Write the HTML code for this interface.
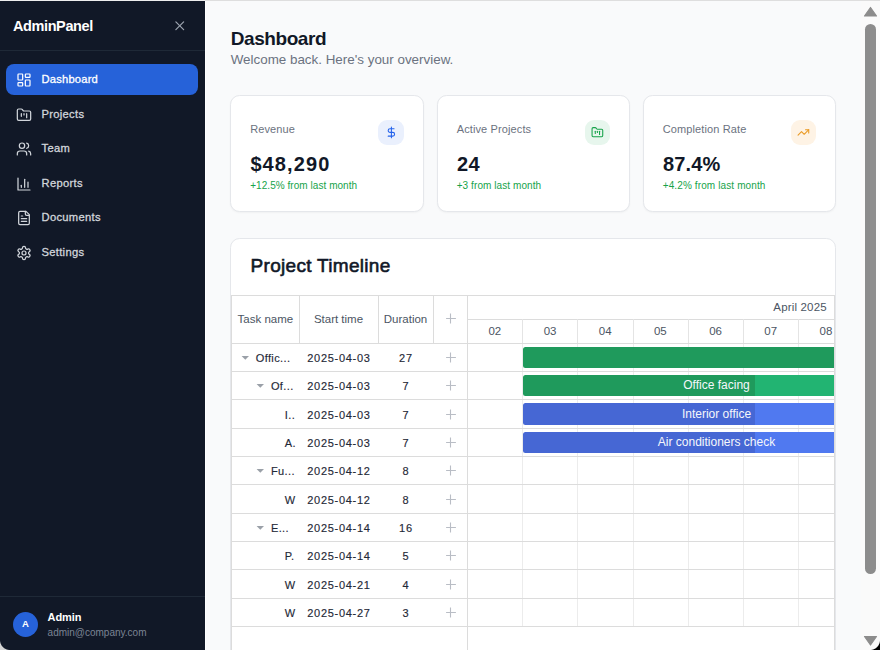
<!DOCTYPE html><html><head><meta charset="utf-8"><style>html,body{margin:0;padding:0;width:880px;height:650px;overflow:hidden;background:#f9fafb}body{position:relative;font-family:"Liberation Sans", sans-serif}</style></head><body><div style="position:absolute;left:0;top:0;width:205px;height:650px;background:#111827"></div><div style="position:absolute;left:13px;top:19.13px;font-size:14.5px;line-height:14.5px;color:#ffffff;font-weight:700;letter-spacing:-0.4px;white-space:nowrap;">AdminPanel</div><svg style="position:absolute;left:172px;top:18px" width="15.5" height="15.5" viewBox="0 0 24 24" fill="none" stroke="#9ca3af" stroke-width="1.9" stroke-linecap="round" stroke-linejoin="round"><path d="M18 6 6 18"/><path d="m6 6 12 12"/></svg><div style="position:absolute;left:0;top:50px;width:205px;height:1px;background:#1f2937"></div><div style="position:absolute;left:6px;top:64px;width:192px;height:31px;border-radius:8px;background:#2662d9"></div><svg style="position:absolute;left:15.75px;top:71.5px" width="16" height="16" viewBox="0 0 24 24" fill="none" stroke="#ffffff" stroke-width="1.85" stroke-linecap="round" stroke-linejoin="round"><rect width="7" height="9" x="3" y="3" rx="1"/><rect width="7" height="5" x="14" y="3" rx="1"/><rect width="7" height="9" x="14" y="12" rx="1"/><rect width="7" height="5" x="3" y="16" rx="1"/></svg><div style="position:absolute;left:41.5px;top:73.72px;font-size:11.2px;line-height:11.2px;color:#ffffff;font-weight:400;letter-spacing:0.2px;white-space:nowrap;-webkit-text-stroke:0.3px #ffffff">Dashboard</div><svg style="position:absolute;left:15.75px;top:106.5px" width="16" height="16" viewBox="0 0 24 24" fill="none" stroke="#d1d5db" stroke-width="1.85" stroke-linecap="round" stroke-linejoin="round"><path d="M4 20h16a2 2 0 0 0 2-2V8a2 2 0 0 0-2-2h-7.93a2 2 0 0 1-1.66-.9l-.82-1.2A2 2 0 0 0 7.93 3H4a2 2 0 0 0-2 2v13c0 1.1.9 2 2 2Z"/><path d="M8 10v4"/><path d="M12 10v2"/><path d="M16 10v6"/></svg><div style="position:absolute;left:41.5px;top:108.72px;font-size:11.2px;line-height:11.2px;color:#d1d5db;font-weight:400;letter-spacing:0.3px;white-space:nowrap;-webkit-text-stroke:0.3px #d1d5db">Projects</div><svg style="position:absolute;left:15.75px;top:140.8px" width="16" height="16" viewBox="0 0 24 24" fill="none" stroke="#d1d5db" stroke-width="1.85" stroke-linecap="round" stroke-linejoin="round"><path d="M16 21v-2a4 4 0 0 0-4-4H6a4 4 0 0 0-4 4v2"/><circle cx="9" cy="7" r="4"/><path d="M22 21v-2a4 4 0 0 0-3-3.87"/><path d="M16 3.13a4 4 0 0 1 0 7.75"/></svg><div style="position:absolute;left:41.5px;top:143.02px;font-size:11.2px;line-height:11.2px;color:#d1d5db;font-weight:400;letter-spacing:0.3px;white-space:nowrap;-webkit-text-stroke:0.3px #d1d5db">Team</div><svg style="position:absolute;left:15.75px;top:175.5px" width="16" height="16" viewBox="0 0 24 24" fill="none" stroke="#d1d5db" stroke-width="1.85" stroke-linecap="round" stroke-linejoin="round"><path d="M3 3v18h18"/><path d="M18 17V9"/><path d="M13 17V5"/><path d="M8 17v-3"/></svg><div style="position:absolute;left:41.5px;top:177.72px;font-size:11.2px;line-height:11.2px;color:#d1d5db;font-weight:400;letter-spacing:0.3px;white-space:nowrap;-webkit-text-stroke:0.3px #d1d5db">Reports</div><svg style="position:absolute;left:15.75px;top:209.8px" width="16" height="16" viewBox="0 0 24 24" fill="none" stroke="#d1d5db" stroke-width="1.85" stroke-linecap="round" stroke-linejoin="round"><path d="M15 2H6a2 2 0 0 0-2 2v16a2 2 0 0 0 2 2h12a2 2 0 0 0 2-2V7Z"/><path d="M14 2v4a2 2 0 0 0 2 2h4"/><path d="M10 9H8"/><path d="M16 13H8"/><path d="M16 17H8"/></svg><div style="position:absolute;left:41.5px;top:212.02px;font-size:11.2px;line-height:11.2px;color:#d1d5db;font-weight:400;letter-spacing:0.3px;white-space:nowrap;-webkit-text-stroke:0.3px #d1d5db">Documents</div><svg style="position:absolute;left:15.75px;top:244.5px" width="16" height="16" viewBox="0 0 24 24" fill="none" stroke="#d1d5db" stroke-width="1.85" stroke-linecap="round" stroke-linejoin="round"><path d="M12.22 2h-.44a2 2 0 0 0-2 2v.18a2 2 0 0 1-1 1.73l-.43.25a2 2 0 0 1-2 0l-.15-.08a2 2 0 0 0-2.73.73l-.22.38a2 2 0 0 0 .73 2.73l.15.1a2 2 0 0 1 1 1.72v.51a2 2 0 0 1-1 1.74l-.15.09a2 2 0 0 0-.73 2.73l.22.38a2 2 0 0 0 2.73.73l.15-.08a2 2 0 0 1 2 0l.43.25a2 2 0 0 1 1 1.73V20a2 2 0 0 0 2 2h.44a2 2 0 0 0 2-2v-.18a2 2 0 0 1 1-1.73l.43-.25a2 2 0 0 1 2 0l.15.08a2 2 0 0 0 2.73-.73l.22-.39a2 2 0 0 0-.73-2.73l-.15-.08a2 2 0 0 1-1-1.74v-.5a2 2 0 0 1 1-1.74l.15-.09a2 2 0 0 0 .73-2.73l-.22-.38a2 2 0 0 0-2.73-.73l-.15.08a2 2 0 0 1-2 0l-.43-.25a2 2 0 0 1-1-1.73V4a2 2 0 0 0-2-2z"/><circle cx="12" cy="12" r="3"/></svg><div style="position:absolute;left:41.5px;top:246.72px;font-size:11.2px;line-height:11.2px;color:#d1d5db;font-weight:400;letter-spacing:0.3px;white-space:nowrap;-webkit-text-stroke:0.3px #d1d5db">Settings</div><div style="position:absolute;left:0;top:596px;width:205px;height:1px;background:#1f2937"></div><div style="position:absolute;left:13px;top:612px;width:25px;height:25px;border-radius:50%;background:#2662d9"></div><div style="position:absolute;left:15.50px;width:20px;text-align:center;top:619.26px;font-size:9.5px;line-height:9.5px;color:#ffffff;font-weight:700;letter-spacing:0px;white-space:nowrap;">A</div><div style="position:absolute;left:47.6px;top:611.69px;font-size:11px;line-height:11px;color:#ffffff;font-weight:700;letter-spacing:-0.1px;white-space:nowrap;">Admin</div><div style="position:absolute;left:47.6px;top:627.53px;font-size:10px;line-height:10px;color:#7b8494;font-weight:400;letter-spacing:0px;white-space:nowrap;">admin@company.com</div><div style="position:absolute;left:205px;top:0;width:675px;height:650px;background:#f9fafb"></div><div style="position:absolute;left:205px;top:0;width:1px;height:650px;background:#ffffff"></div><div style="position:absolute;left:230.7px;top:28.82px;font-size:19px;line-height:19px;color:#111827;font-weight:700;letter-spacing:-0.42px;white-space:nowrap;">Dashboard</div><div style="position:absolute;left:230.7px;top:52.56px;font-size:13.4px;line-height:13.4px;color:#6b7280;font-weight:400;letter-spacing:0px;white-space:nowrap;">Welcome back. Here&#39;s your overview.</div><div style="position:absolute;left:230px;top:95px;width:191.5px;height:114.5px;border:1px solid #e5e7eb;border-radius:9.6px;background:#fff;box-shadow:0 1px 2px rgba(0,0,0,0.04)"></div><div style="position:absolute;left:250.2px;top:123.69px;font-size:11px;line-height:11px;color:#6b7280;font-weight:400;letter-spacing:0.12px;white-space:nowrap;">Revenue</div><div style="position:absolute;left:250.4px;top:154.07px;font-size:20px;line-height:20px;color:#111827;font-weight:700;letter-spacing:1.1px;white-space:nowrap;">$48,290</div><div style="position:absolute;left:250.2px;top:180.53px;font-size:10px;line-height:10px;color:#16a34a;font-weight:400;letter-spacing:0.05px;white-space:nowrap;">+12.5% from last month</div><div style="position:absolute;left:378.3px;top:119.7px;width:25.6px;height:25.6px;border-radius:9px;background:#eaf0fd"></div><svg style="position:absolute;left:384.7px;top:126.10000000000001px" width="12.8" height="12.8" viewBox="0 0 24 24" fill="none" stroke="#2563eb" stroke-width="2" stroke-linecap="round" stroke-linejoin="round"><line x1="12" x2="12" y1="2" y2="22"/><path d="M17 5H9.5a3.5 3.5 0 0 0 0 7h5a3.5 3.5 0 0 1 0 7H6"/></svg><div style="position:absolute;left:436.5px;top:95px;width:191.5px;height:114.5px;border:1px solid #e5e7eb;border-radius:9.6px;background:#fff;box-shadow:0 1px 2px rgba(0,0,0,0.04)"></div><div style="position:absolute;left:456.7px;top:123.69px;font-size:11px;line-height:11px;color:#6b7280;font-weight:400;letter-spacing:0.12px;white-space:nowrap;">Active Projects</div><div style="position:absolute;left:456.9px;top:154.07px;font-size:20px;line-height:20px;color:#111827;font-weight:700;letter-spacing:0.4px;white-space:nowrap;">24</div><div style="position:absolute;left:456.7px;top:180.53px;font-size:10px;line-height:10px;color:#16a34a;font-weight:400;letter-spacing:0.08px;white-space:nowrap;">+3 from last month</div><div style="position:absolute;left:584.8px;top:119.7px;width:25.6px;height:25.6px;border-radius:9px;background:#e7f6ed"></div><svg style="position:absolute;left:591.1999999999999px;top:126.10000000000001px" width="12.8" height="12.8" viewBox="0 0 24 24" fill="none" stroke="#16a34a" stroke-width="2" stroke-linecap="round" stroke-linejoin="round"><path d="M4 20h16a2 2 0 0 0 2-2V8a2 2 0 0 0-2-2h-7.93a2 2 0 0 1-1.66-.9l-.82-1.2A2 2 0 0 0 7.93 3H4a2 2 0 0 0-2 2v13c0 1.1.9 2 2 2Z"/><path d="M8 10v4"/><path d="M12 10v2"/><path d="M16 10v6"/></svg><div style="position:absolute;left:642.5px;top:95px;width:191.5px;height:114.5px;border:1px solid #e5e7eb;border-radius:9.6px;background:#fff;box-shadow:0 1px 2px rgba(0,0,0,0.04)"></div><div style="position:absolute;left:662.7px;top:123.69px;font-size:11px;line-height:11px;color:#6b7280;font-weight:400;letter-spacing:0.12px;white-space:nowrap;">Completion Rate</div><div style="position:absolute;left:662.9px;top:154.07px;font-size:20px;line-height:20px;color:#111827;font-weight:700;letter-spacing:0.2px;white-space:nowrap;">87.4%</div><div style="position:absolute;left:662.7px;top:180.53px;font-size:10px;line-height:10px;color:#16a34a;font-weight:400;letter-spacing:0.12px;white-space:nowrap;">+4.2% from last month</div><div style="position:absolute;left:790.8px;top:119.7px;width:25.6px;height:25.6px;border-radius:9px;background:#fef3e5"></div><svg style="position:absolute;left:797.1999999999999px;top:126.10000000000001px" width="12.8" height="12.8" viewBox="0 0 24 24" fill="none" stroke="#ea9a24" stroke-width="2" stroke-linecap="round" stroke-linejoin="round"><polyline points="22 7 13.5 15.5 8.5 10.5 2 17"/><polyline points="16 7 22 7 22 13"/></svg><div style="position:absolute;left:230px;top:238px;width:604px;height:440px;border:1px solid #e5e7eb;border-radius:9.6px;background:#fff"></div><div style="position:absolute;left:250.6px;top:255.82px;font-size:19px;line-height:19px;color:#111827;font-weight:400;letter-spacing:0.3px;white-space:nowrap;-webkit-text-stroke:0.6px #111827">Project Timeline</div><div style="position:absolute;left:231px;top:295px;width:603px;height:1px;background:#dcdcdc"></div><div style="position:absolute;left:231px;top:295px;width:1px;height:400px;background:#dcdcdc"></div><div style="position:absolute;left:231px;top:343px;width:603px;height:1px;background:#dcdcdc"></div><div style="position:absolute;left:299px;top:295px;width:1px;height:48px;background:#dcdcdc"></div><div style="position:absolute;left:378px;top:295px;width:1px;height:48px;background:#dcdcdc"></div><div style="position:absolute;left:433px;top:295px;width:1px;height:48px;background:#dcdcdc"></div><div style="position:absolute;left:467px;top:295px;width:1px;height:400px;background:#dcdcdc"></div><div style="position:absolute;left:467px;top:319px;width:367px;height:1px;background:#dcdcdc"></div><div style="position:absolute;left:834px;top:295px;width:1px;height:400px;background:#dcdcdc"></div><div style="position:absolute;left:469.88px;width:50px;text-align:center;top:326.37px;font-size:11.5px;line-height:11.5px;color:#4b5563;font-weight:400;letter-spacing:0px;white-space:nowrap;">02</div><div style="position:absolute;left:522px;top:319px;width:1px;height:24px;background:#e4e4e4"></div><div style="position:absolute;left:522px;top:344px;width:1px;height:282px;background:#ececec"></div><div style="position:absolute;left:525.06px;width:50px;text-align:center;top:326.37px;font-size:11.5px;line-height:11.5px;color:#4b5563;font-weight:400;letter-spacing:0px;white-space:nowrap;">03</div><div style="position:absolute;left:577px;top:319px;width:1px;height:24px;background:#e4e4e4"></div><div style="position:absolute;left:577px;top:344px;width:1px;height:282px;background:#ececec"></div><div style="position:absolute;left:580.23px;width:50px;text-align:center;top:326.37px;font-size:11.5px;line-height:11.5px;color:#4b5563;font-weight:400;letter-spacing:0px;white-space:nowrap;">04</div><div style="position:absolute;left:633px;top:319px;width:1px;height:24px;background:#e4e4e4"></div><div style="position:absolute;left:633px;top:344px;width:1px;height:282px;background:#ececec"></div><div style="position:absolute;left:635.39px;width:50px;text-align:center;top:326.37px;font-size:11.5px;line-height:11.5px;color:#4b5563;font-weight:400;letter-spacing:0px;white-space:nowrap;">05</div><div style="position:absolute;left:688px;top:319px;width:1px;height:24px;background:#e4e4e4"></div><div style="position:absolute;left:688px;top:344px;width:1px;height:282px;background:#ececec"></div><div style="position:absolute;left:690.57px;width:50px;text-align:center;top:326.37px;font-size:11.5px;line-height:11.5px;color:#4b5563;font-weight:400;letter-spacing:0px;white-space:nowrap;">06</div><div style="position:absolute;left:743px;top:319px;width:1px;height:24px;background:#e4e4e4"></div><div style="position:absolute;left:743px;top:344px;width:1px;height:282px;background:#ececec"></div><div style="position:absolute;left:745.74px;width:50px;text-align:center;top:326.37px;font-size:11.5px;line-height:11.5px;color:#4b5563;font-weight:400;letter-spacing:0px;white-space:nowrap;">07</div><div style="position:absolute;left:798px;top:319px;width:1px;height:24px;background:#e4e4e4"></div><div style="position:absolute;left:798px;top:344px;width:1px;height:282px;background:#ececec"></div><div style="position:absolute;left:800.90px;width:50px;text-align:center;top:326.37px;font-size:11.5px;line-height:11.5px;color:#4b5563;font-weight:400;letter-spacing:0px;white-space:nowrap;">08</div><div style="position:absolute;left:526.80px;width:300px;text-align:right;top:301.87px;font-size:11.5px;line-height:11.5px;color:#4b5563;font-weight:400;letter-spacing:0.17px;white-space:nowrap;">April 2025</div><div style="position:absolute;left:231.40px;width:68px;text-align:center;top:313.87px;font-size:11.5px;line-height:11.5px;color:#4b5563;font-weight:400;letter-spacing:0px;white-space:nowrap;">Task name</div><div style="position:absolute;left:299.50px;width:78px;text-align:center;top:313.87px;font-size:11.5px;line-height:11.5px;color:#4b5563;font-weight:400;letter-spacing:0px;white-space:nowrap;">Start time</div><div style="position:absolute;left:378.50px;width:54px;text-align:center;top:313.87px;font-size:11.5px;line-height:11.5px;color:#4b5563;font-weight:400;letter-spacing:0px;white-space:nowrap;">Duration</div><svg style="position:absolute;left:445px;top:312px" width="12" height="12"><path d="M1.1 6.5H10.9M5.5 1.6V11.4" stroke="#b9bdc5" stroke-width="1.1"/></svg><div style="position:absolute;left:231px;top:371px;width:603px;height:1px;background:#dcdcdc"></div><svg style="position:absolute;left:240.50px;top:355.00px" width="9" height="5"><path d="M0.6 1 L8 1 L4.3 4.8 Z" fill="#9aa0a8"/></svg><div style="position:absolute;left:255.7px;top:353.19px;font-size:11px;line-height:11px;color:#1f2937;font-weight:400;letter-spacing:0.4px;white-space:nowrap;-webkit-text-stroke:0.15px #1f2937">Offic...</div><div style="position:absolute;left:299.90px;width:78px;text-align:center;top:353.19px;font-size:11px;line-height:11px;color:#1f2937;font-weight:400;letter-spacing:0.7px;white-space:nowrap;-webkit-text-stroke:0.15px #1f2937">2025-04-03</div><div style="position:absolute;left:379.10px;width:54px;text-align:center;top:353.19px;font-size:11px;line-height:11px;color:#1f2937;font-weight:400;letter-spacing:0.9px;white-space:nowrap;-webkit-text-stroke:0.15px #1f2937">27</div><svg style="position:absolute;left:445px;top:351px" width="12" height="12"><path d="M1.1 6.5H10.9M5.5 1.6V11.4" stroke="#b9bdc5" stroke-width="1.1"/></svg><div style="position:absolute;left:231px;top:399px;width:603px;height:1px;background:#dcdcdc"></div><svg style="position:absolute;left:255.90px;top:383.00px" width="9" height="5"><path d="M0.6 1 L8 1 L4.3 4.8 Z" fill="#9aa0a8"/></svg><div style="position:absolute;left:270.9px;top:381.19px;font-size:11px;line-height:11px;color:#1f2937;font-weight:400;letter-spacing:0.4px;white-space:nowrap;-webkit-text-stroke:0.15px #1f2937">Of...</div><div style="position:absolute;left:299.90px;width:78px;text-align:center;top:381.19px;font-size:11px;line-height:11px;color:#1f2937;font-weight:400;letter-spacing:0.7px;white-space:nowrap;-webkit-text-stroke:0.15px #1f2937">2025-04-03</div><div style="position:absolute;left:379.10px;width:54px;text-align:center;top:381.19px;font-size:11px;line-height:11px;color:#1f2937;font-weight:400;letter-spacing:0.9px;white-space:nowrap;-webkit-text-stroke:0.15px #1f2937">7</div><svg style="position:absolute;left:445px;top:379px" width="12" height="12"><path d="M1.1 6.5H10.9M5.5 1.6V11.4" stroke="#b9bdc5" stroke-width="1.1"/></svg><div style="position:absolute;left:231px;top:428px;width:603px;height:1px;background:#dcdcdc"></div><div style="position:absolute;left:284.8px;top:409.69px;font-size:11px;line-height:11px;color:#1f2937;font-weight:400;letter-spacing:0.4px;white-space:nowrap;-webkit-text-stroke:0.15px #1f2937">I..</div><div style="position:absolute;left:299.90px;width:78px;text-align:center;top:409.69px;font-size:11px;line-height:11px;color:#1f2937;font-weight:400;letter-spacing:0.7px;white-space:nowrap;-webkit-text-stroke:0.15px #1f2937">2025-04-03</div><div style="position:absolute;left:379.10px;width:54px;text-align:center;top:409.69px;font-size:11px;line-height:11px;color:#1f2937;font-weight:400;letter-spacing:0.9px;white-space:nowrap;-webkit-text-stroke:0.15px #1f2937">7</div><svg style="position:absolute;left:445px;top:408px" width="12" height="12"><path d="M1.1 6.5H10.9M5.5 1.6V11.4" stroke="#b9bdc5" stroke-width="1.1"/></svg><div style="position:absolute;left:231px;top:456px;width:603px;height:1px;background:#dcdcdc"></div><div style="position:absolute;left:284.8px;top:438.19px;font-size:11px;line-height:11px;color:#1f2937;font-weight:400;letter-spacing:0.4px;white-space:nowrap;-webkit-text-stroke:0.15px #1f2937">A.</div><div style="position:absolute;left:299.90px;width:78px;text-align:center;top:438.19px;font-size:11px;line-height:11px;color:#1f2937;font-weight:400;letter-spacing:0.7px;white-space:nowrap;-webkit-text-stroke:0.15px #1f2937">2025-04-03</div><div style="position:absolute;left:379.10px;width:54px;text-align:center;top:438.19px;font-size:11px;line-height:11px;color:#1f2937;font-weight:400;letter-spacing:0.9px;white-space:nowrap;-webkit-text-stroke:0.15px #1f2937">7</div><svg style="position:absolute;left:445px;top:436px" width="12" height="12"><path d="M1.1 6.5H10.9M5.5 1.6V11.4" stroke="#b9bdc5" stroke-width="1.1"/></svg><div style="position:absolute;left:231px;top:484px;width:603px;height:1px;background:#dcdcdc"></div><svg style="position:absolute;left:255.90px;top:468.00px" width="9" height="5"><path d="M0.6 1 L8 1 L4.3 4.8 Z" fill="#9aa0a8"/></svg><div style="position:absolute;left:270.9px;top:466.19px;font-size:11px;line-height:11px;color:#1f2937;font-weight:400;letter-spacing:0.4px;white-space:nowrap;-webkit-text-stroke:0.15px #1f2937">Fu...</div><div style="position:absolute;left:299.90px;width:78px;text-align:center;top:466.19px;font-size:11px;line-height:11px;color:#1f2937;font-weight:400;letter-spacing:0.7px;white-space:nowrap;-webkit-text-stroke:0.15px #1f2937">2025-04-12</div><div style="position:absolute;left:379.10px;width:54px;text-align:center;top:466.19px;font-size:11px;line-height:11px;color:#1f2937;font-weight:400;letter-spacing:0.9px;white-space:nowrap;-webkit-text-stroke:0.15px #1f2937">8</div><svg style="position:absolute;left:445px;top:464px" width="12" height="12"><path d="M1.1 6.5H10.9M5.5 1.6V11.4" stroke="#b9bdc5" stroke-width="1.1"/></svg><div style="position:absolute;left:231px;top:513px;width:603px;height:1px;background:#dcdcdc"></div><div style="position:absolute;left:284.8px;top:494.69px;font-size:11px;line-height:11px;color:#1f2937;font-weight:400;letter-spacing:0.4px;white-space:nowrap;-webkit-text-stroke:0.15px #1f2937">W</div><div style="position:absolute;left:299.90px;width:78px;text-align:center;top:494.69px;font-size:11px;line-height:11px;color:#1f2937;font-weight:400;letter-spacing:0.7px;white-space:nowrap;-webkit-text-stroke:0.15px #1f2937">2025-04-12</div><div style="position:absolute;left:379.10px;width:54px;text-align:center;top:494.69px;font-size:11px;line-height:11px;color:#1f2937;font-weight:400;letter-spacing:0.9px;white-space:nowrap;-webkit-text-stroke:0.15px #1f2937">8</div><svg style="position:absolute;left:445px;top:493px" width="12" height="12"><path d="M1.1 6.5H10.9M5.5 1.6V11.4" stroke="#b9bdc5" stroke-width="1.1"/></svg><div style="position:absolute;left:231px;top:541px;width:603px;height:1px;background:#dcdcdc"></div><svg style="position:absolute;left:255.90px;top:525.00px" width="9" height="5"><path d="M0.6 1 L8 1 L4.3 4.8 Z" fill="#9aa0a8"/></svg><div style="position:absolute;left:270.9px;top:523.19px;font-size:11px;line-height:11px;color:#1f2937;font-weight:400;letter-spacing:0.4px;white-space:nowrap;-webkit-text-stroke:0.15px #1f2937">E...</div><div style="position:absolute;left:299.90px;width:78px;text-align:center;top:523.19px;font-size:11px;line-height:11px;color:#1f2937;font-weight:400;letter-spacing:0.7px;white-space:nowrap;-webkit-text-stroke:0.15px #1f2937">2025-04-14</div><div style="position:absolute;left:379.10px;width:54px;text-align:center;top:523.19px;font-size:11px;line-height:11px;color:#1f2937;font-weight:400;letter-spacing:0.9px;white-space:nowrap;-webkit-text-stroke:0.15px #1f2937">16</div><svg style="position:absolute;left:445px;top:521px" width="12" height="12"><path d="M1.1 6.5H10.9M5.5 1.6V11.4" stroke="#b9bdc5" stroke-width="1.1"/></svg><div style="position:absolute;left:231px;top:569px;width:603px;height:1px;background:#dcdcdc"></div><div style="position:absolute;left:284.8px;top:551.19px;font-size:11px;line-height:11px;color:#1f2937;font-weight:400;letter-spacing:0.4px;white-space:nowrap;-webkit-text-stroke:0.15px #1f2937">P.</div><div style="position:absolute;left:299.90px;width:78px;text-align:center;top:551.19px;font-size:11px;line-height:11px;color:#1f2937;font-weight:400;letter-spacing:0.7px;white-space:nowrap;-webkit-text-stroke:0.15px #1f2937">2025-04-14</div><div style="position:absolute;left:379.10px;width:54px;text-align:center;top:551.19px;font-size:11px;line-height:11px;color:#1f2937;font-weight:400;letter-spacing:0.9px;white-space:nowrap;-webkit-text-stroke:0.15px #1f2937">5</div><svg style="position:absolute;left:445px;top:549px" width="12" height="12"><path d="M1.1 6.5H10.9M5.5 1.6V11.4" stroke="#b9bdc5" stroke-width="1.1"/></svg><div style="position:absolute;left:231px;top:598px;width:603px;height:1px;background:#dcdcdc"></div><div style="position:absolute;left:284.8px;top:579.69px;font-size:11px;line-height:11px;color:#1f2937;font-weight:400;letter-spacing:0.4px;white-space:nowrap;-webkit-text-stroke:0.15px #1f2937">W</div><div style="position:absolute;left:299.90px;width:78px;text-align:center;top:579.69px;font-size:11px;line-height:11px;color:#1f2937;font-weight:400;letter-spacing:0.7px;white-space:nowrap;-webkit-text-stroke:0.15px #1f2937">2025-04-21</div><div style="position:absolute;left:379.10px;width:54px;text-align:center;top:579.69px;font-size:11px;line-height:11px;color:#1f2937;font-weight:400;letter-spacing:0.9px;white-space:nowrap;-webkit-text-stroke:0.15px #1f2937">4</div><svg style="position:absolute;left:445px;top:578px" width="12" height="12"><path d="M1.1 6.5H10.9M5.5 1.6V11.4" stroke="#b9bdc5" stroke-width="1.1"/></svg><div style="position:absolute;left:231px;top:626px;width:603px;height:1px;background:#dcdcdc"></div><div style="position:absolute;left:284.8px;top:608.19px;font-size:11px;line-height:11px;color:#1f2937;font-weight:400;letter-spacing:0.4px;white-space:nowrap;-webkit-text-stroke:0.15px #1f2937">W</div><div style="position:absolute;left:299.90px;width:78px;text-align:center;top:608.19px;font-size:11px;line-height:11px;color:#1f2937;font-weight:400;letter-spacing:0.7px;white-space:nowrap;-webkit-text-stroke:0.15px #1f2937">2025-04-27</div><div style="position:absolute;left:379.10px;width:54px;text-align:center;top:608.19px;font-size:11px;line-height:11px;color:#1f2937;font-weight:400;letter-spacing:0.9px;white-space:nowrap;-webkit-text-stroke:0.15px #1f2937">3</div><svg style="position:absolute;left:445px;top:606px" width="12" height="12"><path d="M1.1 6.5H10.9M5.5 1.6V11.4" stroke="#b9bdc5" stroke-width="1.1"/></svg><div style="position:absolute;left:468px;top:344px;width:366px;height:300px;overflow:hidden"><div style="position:absolute;left:55px;top:3px;width:400px;height:21px;border-radius:2.5px;background:#1f9a5c"></div><div style="position:absolute;left:55px;top:31px;width:400px;height:21px;border-radius:2.5px;background:linear-gradient(to right,#1f9a5c 0,#1f9a5c 232px,#22b472 232px)"></div><div style="position:absolute;left:148.50px;width:200px;text-align:center;top:35.34px;font-size:12px;line-height:12px;color:#f5f7fb;font-weight:400;letter-spacing:0px;white-space:nowrap;">Office facing</div><div style="position:absolute;left:55px;top:59px;width:400px;height:22px;border-radius:2.5px;background:linear-gradient(to right,#4667d4 0,#4667d4 232px,#5079f0 232px)"></div><div style="position:absolute;left:148.50px;width:200px;text-align:center;top:63.84px;font-size:12px;line-height:12px;color:#f5f7fb;font-weight:400;letter-spacing:0px;white-space:nowrap;">Interior office</div><div style="position:absolute;left:55px;top:88px;width:400px;height:21px;border-radius:2.5px;background:linear-gradient(to right,#4667d4 0,#4667d4 232px,#5079f0 232px)"></div><div style="position:absolute;left:148.50px;width:200px;text-align:center;top:92.34px;font-size:12px;line-height:12px;color:#f5f7fb;font-weight:400;letter-spacing:0px;white-space:nowrap;">Air conditioners check</div></div><div style="position:absolute;left:861px;top:0;width:19px;height:650px;background:#fafafa"></div><div style="position:absolute;left:865px;top:24px;width:11px;height:550px;border-radius:5.5px;background:#8c8c8c"></div><svg style="position:absolute;left:863px;top:6px" width="15" height="12"><path d="M7.5 1.5 L13.5 10 L1.5 10 Z" fill="#8c8c8c" stroke="#8c8c8c" stroke-width="1.2" stroke-linejoin="round"/></svg><svg style="position:absolute;left:863px;top:635px" width="15" height="12"><path d="M1.5 1.5 L13.5 1.5 L7.5 10 Z" fill="#8c8c8c" stroke="#8c8c8c" stroke-width="1.2" stroke-linejoin="round"/></svg><div style="position:absolute;left:0;top:0;width:205px;height:1px;background:#eeeeee"></div><div style="position:absolute;left:205px;top:0;width:675px;height:1px;background:#dedede"></div><div style="position:absolute;left:0;top:640px;width:10px;height:10px;background:radial-gradient(circle at 100% 0,transparent 9.5px,#d4d4d4 10.5px)"></div><div style="position:absolute;left:870px;top:640px;width:10px;height:10px;background:radial-gradient(circle at 0 0,transparent 9.5px,#000 10.5px)"></div></body></html>
